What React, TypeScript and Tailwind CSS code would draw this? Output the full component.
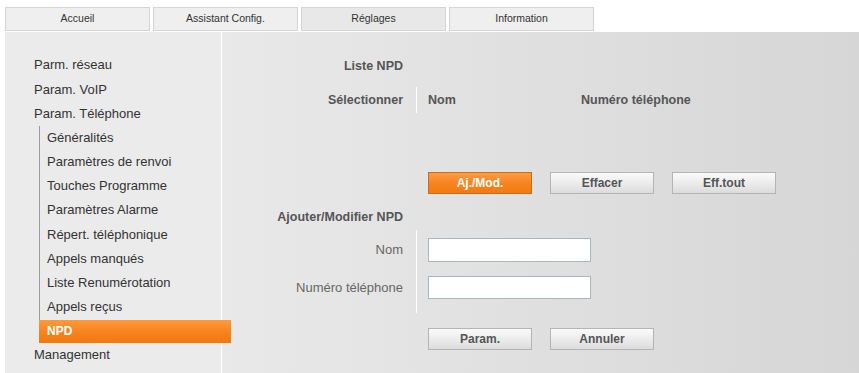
import React from 'react';

const tabs = ['Accueil', 'Assistant Config.', 'Réglages', 'Information'];

const subItems = [
  'Généralités',
  'Paramètres de renvoi',
  'Touches Programme',
  'Paramètres Alarme',
  'Répert. téléphonique',
  'Appels manqués',
  'Liste Renumérotation',
  'Appels reçus',
];

function Button({ label, primary }: { label: string; primary?: boolean }) {
  return (
    <button
      className={
        primary
          ? 'w-[104px] h-[22px] border border-[#d06a14] bg-gradient-to-b from-[#ff9c45] via-[#f7841f] to-[#f47a12] text-white font-bold text-[12px]'
          : 'w-[104px] h-[22px] border border-[#b4b4b4] bg-gradient-to-b from-[#fafafa] via-[#ececec] to-[#dcdcdc] text-[#555] font-bold text-[12px]'
      }
    >
      {label}
    </button>
  );
}

export default function App() {
  return (
    <div className="h-[373px] w-[859px] overflow-hidden bg-white font-['Liberation_Sans',Arial,sans-serif]">
      <div className="flex gap-[3px] pl-[5px] pt-[7px] h-[32px]">
        {tabs.map((t) => (
          <div
            key={t}
            className={`w-[145px] h-[24px] flex items-center justify-center border border-[#d4d4d4] text-[10.5px] text-[#333] ${
              t === 'Réglages' ? 'bg-[#e8e8e8]' : 'bg-[#efefef]'
            }`}
          >
            {t}
          </div>
        ))}
      </div>

      <div className="flex ml-[5px] h-[341px]">
        <nav className="w-[216px] shrink-0 bg-[#ebebeb] pt-[21px] pl-[29px] text-[13px] text-[#333] relative z-10">
          <div className="h-[24.2px] flex items-center">Parm. réseau</div>
          <div className="h-[24.2px] flex items-center">Param. VoIP</div>
          <div className="h-[24.2px] flex items-center">Param. Téléphone</div>
          <div className="ml-[5px] border-l border-[#9a9a9a]">
            {subItems.map((s) => (
              <div key={s} className="h-[24.2px] flex items-center pl-[7px]">
                {s}
              </div>
            ))}
            <div className="h-[23px] mt-[0.6px] -ml-px w-[192px] flex items-center pl-[8px] bg-gradient-to-b from-[#ff9a3c] via-[#f8841c] to-[#f27810] text-white font-bold text-[12px]">
              NPD
            </div>
          </div>
          <div className="h-[24.2px] flex items-center">Management</div>
        </nav>

        <div className="w-px bg-white shrink-0" />

        <main className="flex-1 bg-gradient-to-r from-[#e9e9e9] to-[#d6d6d6] pt-[22px] text-[12.5px]">
          <div className="flex h-[24px] items-center">
            <div className="w-[181px] text-right font-bold text-[#555]">Liste NPD</div>
          </div>

          <div className="flex h-[26px] mt-[9px] items-center">
            <div className="w-[181px] text-right font-bold text-[#555]">Sélectionner</div>
            <div className="w-px h-full bg-white ml-[13px]" />
            <div className="ml-[11px] w-[153px] font-bold text-[#555]">Nom</div>
            <div className="font-bold text-[#555]">Numéro téléphone</div>
          </div>

          <div className="flex gap-[18px] ml-[206px] mt-[59px]">
            <Button label="Aj./Mod." primary />
            <Button label="Effacer" />
            <Button label="Eff.tout" />
          </div>

          <div className="flex h-[20px] mt-[13px] items-center">
            <div className="w-[181px] text-right font-bold text-[#555]">Ajouter/Modifier NPD</div>
          </div>

          <div className="flex mt-[3px]">
            <div className="w-[181px] pt-[8px] text-right text-[#666] text-[13px]">
              <div className="h-[24px] flex items-center justify-end">Nom</div>
              <div className="h-[24px] mt-[14px] flex items-center justify-end">Numéro téléphone</div>
            </div>
            <div className="w-px bg-white ml-[13px]" />
            <div className="ml-[11px] pt-[8px] pb-[14px] flex flex-col gap-[14px]">
              <input className="w-[163px] h-[24px] bg-white border border-[#a8b6c4] outline-none" />
              <input className="w-[163px] h-[23px] bg-white border border-[#a8b6c4] outline-none" />
            </div>
          </div>

          <div className="flex gap-[18px] ml-[206px] mt-[15px]">
            <Button label="Param." />
            <Button label="Annuler" />
          </div>
        </main>
      </div>
    </div>
  );
}
